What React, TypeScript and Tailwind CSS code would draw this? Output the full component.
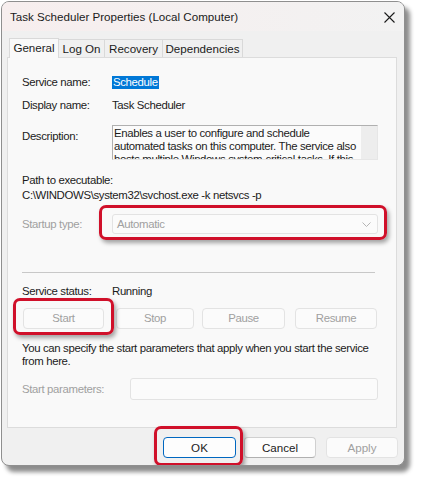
import React from "react";

const FONT = { fontFamily: '"Liberation Sans", Arial, sans-serif' };

function Highlight({ className }: { className: string }) {
  return (
    <span
      className={`pointer-events-none absolute z-20 rounded-[7px] border-[3px] border-[#d0102a] shadow-[2px_3px_4px_rgba(0,0,0,0.35)] ${className}`}
    />
  );
}

function Tab({ label, active }: { label: string; active?: boolean }) {
  if (active) {
    return (
      <div className="relative z-10 -mb-px flex h-[20px] w-[50px] items-start justify-center border border-b-0 border-[#d9d9d9] bg-[#f9f9f9] pt-[2px]">
        {label}
      </div>
    );
  }
  return (
    <div className="-ml-px flex h-[18px] items-center justify-center whitespace-nowrap border border-b-0 border-[#d9d9d9] bg-[#f0f0f0]">
      {label}
    </div>
  );
}

function ServiceButton({ label }: { label: string }) {
  return (
    <div className="flex h-[21px] items-center justify-center rounded-[4px] border border-[#e3e3e3] bg-[#fbfbfb] text-[#a0a0a0]">
      {label}
    </div>
  );
}

export default function App() {
  return (
    <div
      className="min-h-[483px] whitespace-nowrap bg-white pl-px pt-px text-[11.6px] leading-[13px] text-[#1b1b1b]"
      style={FONT}
    >
      <div className="flex h-[465px] w-[404px] flex-col overflow-hidden rounded-[8px] border border-[#8f8f8f] bg-[#f0f0f0] shadow-[5px_6px_4px_rgba(0,0,0,0.45)]">
        {/* title bar */}
        <div className="flex h-[29px] shrink-0 items-center justify-between bg-linear-to-r from-[#f7eeee] to-[#f2f2f2] pl-[8px] pr-[9px]">
          <span>Task Scheduler Properties (Local Computer)</span>
          <svg width="11" height="11" viewBox="0 0 11 11" className="mt-px">
            <path d="M0.5 0.5 L10.5 10.5 M10.5 0.5 L0.5 10.5" stroke="#1b1b1b" strokeWidth="1.1" />
          </svg>
        </div>

        {/* tabs */}
        <div className="mt-[7px] flex items-end pl-[7px]">
          <Tab label="General" active />
          <div className="w-[46px]">
            <Tab label="Log On" />
          </div>
          <div className="w-[58px]">
            <Tab label="Recovery" />
          </div>
          <div className="w-[80px]">
            <Tab label="Dependencies" />
          </div>
        </div>

        {/* panel */}
        <div className="ml-[5px] flex h-[371px] w-[390px] flex-col border border-[#dcdcdc] bg-[#f9f9f9] pl-[14px] pr-[18px] text-[11.4px] tracking-[-0.35px]">
          <div className="mt-[18px] flex h-[13px] items-center">
            <span className="w-[90px]">Service name:</span>
            <span className="bg-[#0078d7] px-px text-white">Schedule</span>
          </div>
          <div className="mt-[10px] flex h-[13px] items-center">
            <span className="w-[90px]">Display name:</span>
            <span>Task Scheduler</span>
          </div>
          <div className="mt-[13px] flex">
            <span className="mt-[5px] w-[90px]">Description:</span>
            <div className="flex h-[35px] flex-1 overflow-hidden border border-[#b0b0b0] border-b-[#e6e6e6] border-r-[#e6e6e6] bg-[#fbfbfb]">
              <div className="flex-1 overflow-hidden pl-[1px] pt-px leading-[13px]">
                Enables a user to configure and schedule
                <br />
                automated tasks on this computer. The service also
                <br />
                hosts multiple Windows system-critical tasks. If this
              </div>
              <div className="w-[16px] shrink-0 bg-[#ededed]" />
            </div>
          </div>
          <div className="mt-[13px] leading-[15px]">
            <div>Path to executable:</div>
            <div>C:\WINDOWS\system32\svchost.exe -k netsvcs -p</div>
          </div>
          <div className="mt-[11px] flex items-center">
            <span className="w-[90px] text-[#a0a0a0]">Startup type:</span>
            <div className="relative flex h-[20px] flex-1 items-center justify-between rounded-[3px] border border-[#e3e3e3] bg-[#fbfbfb] pl-[4px] pr-[6px] text-[#a0a0a0]">
              <span>Automatic</span>
              <svg width="9" height="5" viewBox="0 0 9 5">
                <path d="M0.5 0.5 L4.5 4.5 L8.5 0.5" fill="none" stroke="#b5b5b5" strokeWidth="1" />
              </svg>
              <Highlight className="-left-[14px] -right-[10px] -top-[10px] -bottom-[7px]" />
            </div>
          </div>
          <div className="mt-[38px] h-px w-[353px] bg-[#c8c8c8]" />
          <div className="mt-[12px] flex h-[13px] items-center">
            <span className="w-[90px]">Service status:</span>
            <span>Running</span>
          </div>
          <div className="mt-[10px] grid grid-cols-[81px_78px_83px_82px] gap-x-[10px] pl-px">
            <div className="relative">
              <ServiceButton label="Start" />
              <Highlight className="-left-[10px] -right-[10px] -top-[10px] -bottom-[6px]" />
            </div>
            <div className="ml-[2px] -mr-[2px]">
              <ServiceButton label="Stop" />
            </div>
            <ServiceButton label="Pause" />
            <ServiceButton label="Resume" />
          </div>
          <div className="mt-[13px] leading-[12.5px]">
            You can specify the start parameters that apply when you start the service
            <br />
            from here.
          </div>
          <div className="mt-[11px] flex items-center">
            <span className="w-[108px] text-[#a0a0a0]">Start parameters:</span>
            <div className="h-[22px] flex-1 rounded-[3px] border border-[#e3e3e3] bg-[#fbfbfb]" />
          </div>
        </div>

        {/* dialog buttons */}
        <div className="mt-[9px] flex justify-end gap-x-[8px] pr-[6px]">
          <div className="relative">
            <div className="flex h-[21px] w-[73px] items-center justify-center rounded-[4px] border border-[#0067c0] bg-[#fdfdfd]">
              OK
            </div>
            <Highlight className="-left-[9px] -right-[7px] -top-[11px] -bottom-[8px]" />
          </div>
          <div className="flex h-[21px] w-[72px] items-center justify-center rounded-[4px] border border-[#d0d0d0] border-b-[#b0b0b0] bg-[#fdfdfd]">
            Cancel
          </div>
          <div className="ml-[2px] flex h-[21px] w-[72px] items-center justify-center rounded-[4px] border border-[#e3e3e3] bg-[#fbfbfb] text-[#a0a0a0]">
            Apply
          </div>
        </div>
      </div>
    </div>
  );
}
